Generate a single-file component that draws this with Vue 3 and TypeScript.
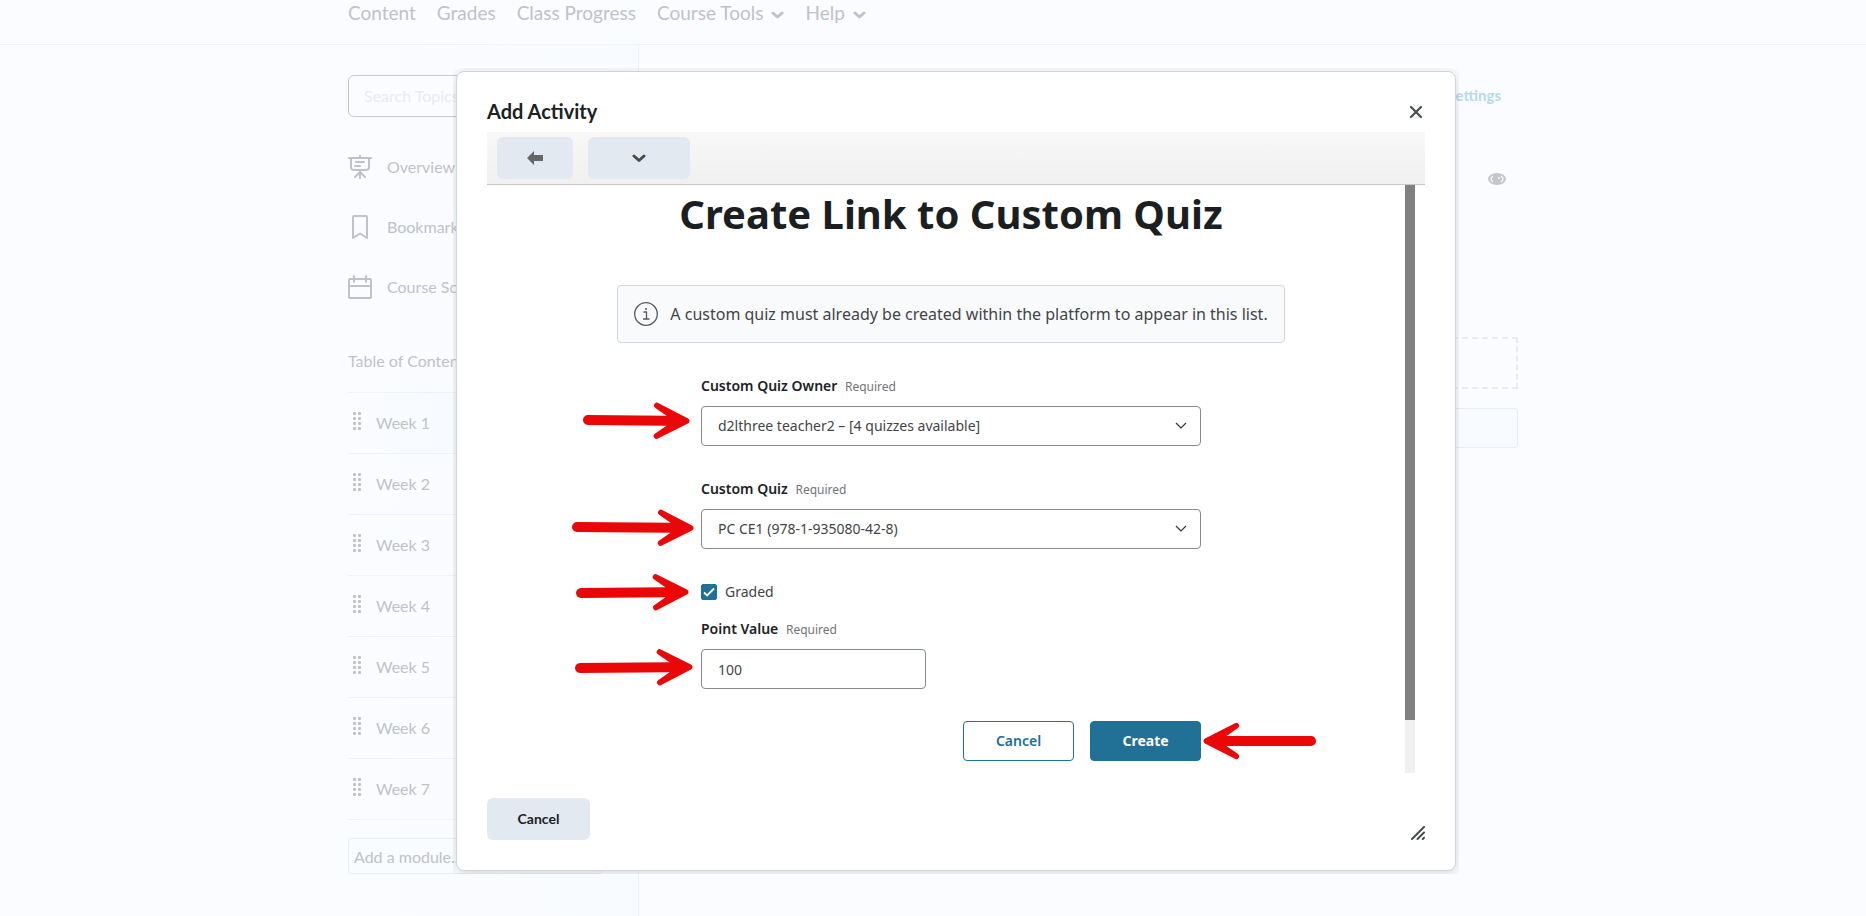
<script setup lang="ts">
import { ref } from 'vue'

interface Arrow {
  x: number
  y: number
  length: number
  angle: number
}

const navItems = [
  { label: 'Content', menu: false },
  { label: 'Grades', menu: false },
  { label: 'Class Progress', menu: false },
  { label: 'Course Tools', menu: true },
  { label: 'Help', menu: true },
]
const weeks = [1, 2, 3, 4, 5, 6, 7]

const search = ref('')
const moduleName = ref('')
const owner = ref('d2lthree teacher2 – [4 quizzes available]')
const quiz = ref('PC CE1 (978-1-935080-42-8)')
const graded = ref(true)
const points = ref('100')

// Tip position inside the dialog, length of the whole arrow and its rotation.
const arrows: Arrow[] = [
  { x: 233, y: 350, length: 106, angle: 0.5 },
  { x: 237, y: 457, length: 121, angle: 0.5 },
  { x: 232, y: 521, length: 112, angle: -0.5 },
  { x: 236, y: 596, length: 117, angle: -0.5 },
  { x: 748, y: 670, length: 112, angle: 180 },
]

function arrowPath(length: number): string {
  const tail = 5 - length
  return (
    `M-1-2.5 L-30.500-17.500 A2.8 2.8 0 0 0-34-13 L-22.500-5 L${tail}-5 A5 5 0 0 0 ${tail} 5 ` +
    `L-22.500 5 L-34 13 A2.8 2.8 0 0 0-30.500 17.500 L-1 2.5 A2.8 2.8 0 0 0-1-2.5Z`
  )
}
</script>

<template>
  <div class="page">
    <header class="navbar">
      <nav class="container nav-list">
        <a v-for="item in navItems" :key="item.label" href="#" class="nav-link">
          {{ item.label }}
          <svg v-if="item.menu" class="nav-chevron" width="13" height="8" viewBox="0 0 13 8" fill="none" stroke="currentColor" stroke-width="3" stroke-linecap="round" stroke-linejoin="round"><path d="M2 2l4.500 4L11 2" /></svg>
        </a>
      </nav>
    </header>

    <div class="container columns">
      <aside class="sidebar">
        <input v-model="search" class="search" type="text" placeholder="Search Topics" aria-label="Search Topics" />
        <a href="#" class="side-link">
          <svg width="24" height="24" viewBox="0 0 24 24" fill="none" stroke="currentColor" stroke-width="2" stroke-linecap="round" stroke-linejoin="round"><path d="M1 3h22M12 1v2M3 3v9q0 3 3 3h12q3 0 3-3V3M8 7h8M7 11h5M12 15v8M12 17l-5 5M12 17l5 5" /></svg>
          Overview
        </a>
        <a href="#" class="side-link">
          <svg width="24" height="24" viewBox="0 0 24 24" fill="none" stroke="currentColor" stroke-width="2" stroke-linejoin="round"><path d="M6 1h12q1 0 1 1v21l-7-4.500L5 23V2q0-1 1-1z" /></svg>
          Bookmarks
        </a>
        <a href="#" class="side-link">
          <svg width="24" height="24" viewBox="0 0 24 24" fill="none" stroke="currentColor" stroke-width="2" stroke-linecap="round"><rect x="1" y="4" width="22" height="19" rx="1" /><path d="M1 11h22M6 1v6M18 1v6" /></svg>
          Course Schedule
        </a>
        <a href="#" class="toc">Table of Contents</a>
        <ul class="weeks">
          <li v-for="week in weeks" :key="week" :class="{ selected: week === 1 }">
            <a href="#" class="week">
              <svg width="8" height="18" viewBox="0 0 8 18" fill="currentColor">
                <template v-for="row in 4" :key="row">
                  <rect x="0" :y="row * 5 - 5" width="3" height="3" rx="1" />
                  <rect x="5" :y="row * 5 - 5" width="3" height="3" rx="1" />
                </template>
              </svg>
              Week {{ week }}
            </a>
          </li>
        </ul>
        <input v-model="moduleName" class="add-module" type="text" placeholder="Add a module..." aria-label="Add a module" />
      </aside>

      <main class="main">
        <a href="#" class="settings">Settings</a>
        <button class="eye" type="button" aria-label="Visibility">
          <svg width="18" height="12" viewBox="0 0 18 12"><ellipse cx="9" cy="6" rx="9" ry="6" fill="currentColor" /><path d="M5 3Q1 6 5 9M13 3Q17 6 13 9" fill="none" stroke="#fbfcff" stroke-width="1.300" /><circle cx="11" cy="5" r="1" fill="#fbfcff" /></svg>
        </button>
        <div class="drop-zone"></div>
        <div class="new-item"></div>
      </main>
    </div>

    <div class="overlay">
      <div class="dialog-frame">
        <section class="dialog" role="dialog" aria-labelledby="dialog-title">
          <header class="dialog-head">
            <h2 id="dialog-title">Add Activity</h2>
            <button class="close" type="button" aria-label="Close">
              <svg width="14" height="14" viewBox="0 0 14 14" fill="none" stroke="currentColor" stroke-width="2.200" stroke-linecap="round"><path d="M2 2l10 10M12 2L2 12" /></svg>
            </button>
          </header>

          <div class="toolbar">
            <button class="tool back" type="button" aria-label="Back">
              <svg width="16" height="14" viewBox="0 0 16 14" fill="#666"><path d="M0 7l7-7v4h9v6H7v4z" /></svg>
            </button>
            <button class="tool more" type="button" aria-label="More">
              <svg width="14" height="9" viewBox="0 0 14 9" fill="none" stroke="#494c4e" stroke-width="3" stroke-linecap="round" stroke-linejoin="round"><path d="M2 2l5 4.500L12 2" /></svg>
            </button>
          </div>

          <div class="frame">
            <div class="frame-body">
              <h1>Create Link to Custom Quiz</h1>
              <p class="notice">
                <svg width="24" height="24" viewBox="0 0 24 24" fill="none" stroke="#565a5c" stroke-width="1.300"><circle cx="12" cy="12" r="11.300" /><path d="M9.500 10h3v7M9 17h6.500" /><circle cx="12" cy="7" r="1" fill="#565a5c" stroke="none" /></svg>
                A custom quiz must already be created within the platform to appear in this list.
              </p>
              <form class="form" @submit.prevent>
                <label class="label" for="owner">Custom Quiz Owner <small>Required</small></label>
                <div class="select-box">
                  <select id="owner" v-model="owner" class="field">
                    <option>d2lthree teacher2 – [4 quizzes available]</option>
                  </select>
                  <svg width="12" height="8" viewBox="0 0 12 8" fill="none" stroke="#333" stroke-width="1.200"><path d="M1 1l5 5 5-5" /></svg>
                </div>
                <label class="label" for="quiz">Custom Quiz <small>Required</small></label>
                <div class="select-box">
                  <select id="quiz" v-model="quiz" class="field">
                    <option>PC CE1 (978-1-935080-42-8)</option>
                  </select>
                  <svg width="12" height="8" viewBox="0 0 12 8" fill="none" stroke="#333" stroke-width="1.200"><path d="M1 1l5 5 5-5" /></svg>
                </div>
                <label class="check">
                  <span class="check-box">
                    <input v-model="graded" type="checkbox" />
                    <svg v-if="graded" width="16" height="16" viewBox="0 0 16 16" fill="none" stroke="#fff" stroke-width="1.800"><path d="M3 8.500l3.200 3L13 4.500" /></svg>
                  </span>
                  Graded
                </label>
                <label class="label" for="points">Point Value <small>Required</small></label>
                <input id="points" v-model="points" class="field points" type="text" />
                <div class="actions">
                  <button class="action" type="button">Cancel</button>
                  <button class="action primary" type="submit">Create</button>
                </div>
              </form>
            </div>
            <div class="scrollbar"><div class="thumb"></div></div>
          </div>

          <footer class="dialog-foot">
            <button class="cancel" type="button">Cancel</button>
            <svg width="14" height="14" viewBox="0 0 14 14" fill="none" stroke="#494c4e" stroke-width="2" stroke-linecap="round"><path d="M1 13L13 1M6.500 13L13 6.500M11.800 13l1.200-1.200" /></svg>
          </footer>

          <svg class="arrows" viewBox="0 0 1000 800" width="1000" height="800" fill="#ea0707" aria-hidden="true">
            <path v-for="(arrow, i) in arrows" :key="i" :d="arrowPath(arrow.length)" :transform="`translate(${arrow.x} ${arrow.y}) rotate(${arrow.angle})`" />
          </svg>
        </section>
      </div>
    </div>
  </div>
</template>

<style>
body {
  margin: 0;
  background: #fbfcff;
}
</style>

<style scoped>
* {
  box-sizing: border-box;
}
.page {
  position: relative;
  display: flex;
  flex-direction: column;
  min-height: 100vh;
  overflow: hidden;
  font-family: Lato, "Liberation Sans", sans-serif;
  font-size: 16px;
  line-height: 24px;
  color: #c0c2c5;
}
a {
  color: inherit;
  text-decoration: none;
}
button,
input,
select {
  margin: 0;
  font: inherit;
}
.container {
  width: 100%;
  max-width: 1170px;
  margin: 0 auto;
}
.navbar {
  height: 45px;
  border-bottom: 1px solid #eff1f6;
}
.nav-list {
  display: flex;
  gap: 21px;
  padding-top: 1px;
  font-size: 19px;
}
.nav-link {
  display: flex;
  align-items: center;
  gap: 8px;
}
.nav-chevron {
  margin-top: 4px;
}
.columns {
  display: flex;
  flex: 1;
}
.sidebar {
  width: 291px;
  padding: 30px 36px 0 0;
  border-right: 1px solid #edf2f8;
  background: linear-gradient(90deg, #fbfcff, #f8fbff);
}
.search {
  display: block;
  width: 100%;
  height: 42px;
  padding: 0 15px 2px;
  border: 1px solid #c6cacf;
  border-radius: 6px;
  background: #fbfcff;
}
.search::placeholder {
  color: #e9ebf1;
  opacity: 1;
}
.side-link {
  display: flex;
  align-items: center;
  gap: 15px;
  height: 24px;
  margin-top: 36px;
}
.search + .side-link {
  margin-top: 38px;
}
.toc {
  display: block;
  margin-top: 50px;
}
.weeks {
  margin: 19px 0 0;
  padding: 0;
  list-style: none;
  border-top: 1px solid #eef2f8;
}
.weeks li {
  border-bottom: 1px solid #eef2f8;
}
.selected {
  background: linear-gradient(90deg, #fbfcff, #f5faff 50%);
}
.week {
  display: flex;
  align-items: center;
  gap: 15px;
  height: 60px;
  padding: 0 5px;
}
.week svg {
  margin-top: -4px;
}
.add-module {
  display: block;
  width: 100%;
  height: 36px;
  margin-top: 18px;
  padding: 0 5px;
  border: 1px solid #e8edf2;
  border-radius: 3px;
  background: #f9fcff;
}
.add-module::placeholder {
  color: #c0c2c5;
  opacity: 1;
}
.main {
  display: flex;
  flex: 1;
  flex-direction: column;
  padding: 38px 0 0 30px;
}
.settings {
  align-self: flex-end;
  margin-right: 17px;
  color: #b5d8f1;
  font-size: 15px;
  font-weight: 700;
}
.eye {
  display: flex;
  align-self: flex-end;
  margin: 66px 12px 0 0;
  padding: 0;
  border: 0;
  background: none;
  color: #c4c6ca;
}
.drop-zone {
  height: 52px;
  margin-top: 152px;
  border: 2px dashed #e9ebf1;
}
.new-item {
  height: 40px;
  margin-top: 19px;
  border: 1px solid #e9eef3;
  border-radius: 3px;
  background: #f8fbff;
}
.overlay {
  position: absolute;
  inset: 0;
  display: flex;
  align-items: flex-start;
  justify-content: center;
  padding: 68px 0 0 46px;
}
.dialog-frame {
  padding: 3px;
  overflow: hidden;
}
.dialog {
  position: relative;
  width: 1000px;
  padding: 22px 30px 30px;
  border: 1px solid #cdd5dc;
  border-radius: 8px;
  background: #fff;
  box-shadow: 0 2px 12px rgba(0, 0, 0, 0.15);
  color: #202122;
}
.dialog-head {
  display: flex;
  align-items: center;
  justify-content: space-between;
  height: 38px;
  padding-bottom: 3px;
}
.dialog-head h2 {
  margin: 0;
  padding-bottom: 2px;
  font-size: 20px;
  font-weight: 700;
}
.close {
  display: flex;
  margin-right: 2px;
  padding: 0;
  border: 0;
  background: none;
  color: #494c4e;
}
.toolbar {
  display: flex;
  gap: 15px;
  height: 53px;
  padding: 5px 10px;
  border-bottom: 1px solid #c9c9c9;
  background: linear-gradient(#f8f8f8, #f0f0f0);
}
.tool {
  display: flex;
  align-items: center;
  justify-content: center;
  height: 42px;
  border: 0;
  border-radius: 6px;
  background: #e3e9f1;
}
.back {
  width: 76px;
}
.more {
  width: 102px;
}
.frame {
  display: flex;
  height: 588px;
  margin-right: 10px;
  font-family: "Noto Sans", "Open Sans", sans-serif;
  font-size: 14px;
}
.frame-body {
  display: flex;
  flex: 1;
  flex-direction: column;
  align-items: center;
  padding-left: 10px;
}
h1 {
  margin: 0;
  color: #1b1f22;
  font-size: 40px;
  font-weight: 700;
  line-height: 58px;
}
.notice {
  display: flex;
  align-items: center;
  gap: 12px;
  height: 58px;
  margin: 42px 0 0;
  padding: 0 16px;
  border: 1px solid #d2d6da;
  border-radius: 4px;
  background: #f9fafc;
  color: #424547;
  font-size: 16px;
}
.form {
  display: flex;
  flex-direction: column;
  width: 500px;
  padding-top: 31px;
}
.label {
  margin-bottom: 8px;
  color: #202124;
  font-weight: 600;
}
.label small {
  margin-left: 4px;
  color: #717577;
  font-size: 12px;
  font-weight: 400;
  line-height: 12px;
}
.select-box {
  position: relative;
  margin-bottom: 31px;
}
.select-box svg {
  position: absolute;
  top: 16px;
  right: 14px;
  pointer-events: none;
}
.field {
  display: block;
  width: 100%;
  height: 40px;
  padding: 0 16px;
  appearance: none;
  border: 1px solid #858b8d;
  border-radius: 4px;
  background: #fff;
  color: #424547;
}
.points {
  width: 225px;
}
.check {
  display: flex;
  align-items: center;
  gap: 8px;
  margin-bottom: 13px;
  color: #424547;
}
.check-box {
  position: relative;
  display: flex;
}
.check-box input {
  width: 16px;
  height: 16px;
  appearance: none;
  border: 1px solid #217096;
  border-radius: 2px;
}
.check-box input:checked {
  background: #217096;
}
.check-box svg {
  position: absolute;
  inset: 0;
  pointer-events: none;
}
.actions {
  display: flex;
  justify-content: flex-end;
  gap: 16px;
  margin-top: 32px;
}
.action {
  width: 111px;
  height: 40px;
  border: 1px solid #217096;
  border-radius: 4px;
  background: #fff;
  color: #217096;
  font-weight: 600;
}
.primary {
  background: #217096;
  color: #fff;
  font-weight: 700;
}
.scrollbar {
  width: 10px;
  background: #f0f0f0;
}
.thumb {
  height: 91%;
  background: #808080;
}
.dialog-foot {
  display: flex;
  align-items: flex-end;
  justify-content: space-between;
  margin-top: 25px;
}
.cancel {
  width: 103px;
  height: 42px;
  border: 0;
  border-radius: 6px;
  background: #e3e9f1;
  color: #202122;
  font-size: 14px;
  font-weight: 700;
}
.arrows {
  position: absolute;
  top: -1px;
  left: -1px;
  pointer-events: none;
}
</style>
